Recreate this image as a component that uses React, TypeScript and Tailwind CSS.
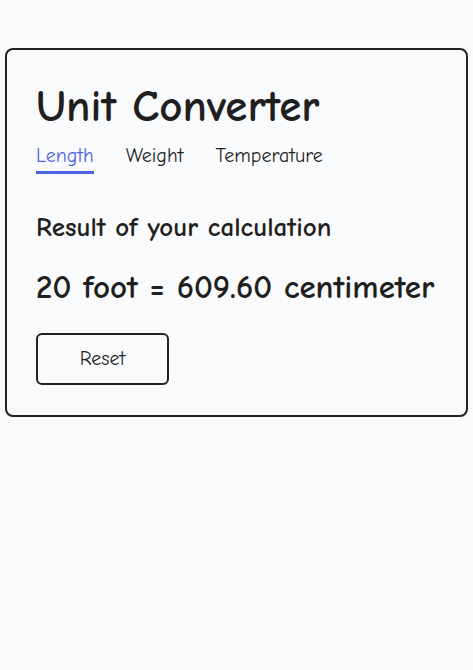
import React, { useState } from 'react';

const tabs = ['Length', 'Weight', 'Temperature'];

export default function App() {
    const [active, setActive] = useState('Length');

    return (
        <div
            className="min-h-screen bg-[#f9fafb] px-[5px] pt-[48px] text-[#1f1f1f]"
            style={{ fontFamily: '"Comic Neue", "Comic Sans MS", "Liberation Sans", sans-serif' }}
        >
            <div className="rounded-[8px] border-2 border-[#222] px-[29px] pt-[28px] pb-[30px]">
                <h1 className="text-[45px] leading-[56px] font-bold">Unit Converter</h1>

                {/* Tabs */}
                <div className="mt-[9px] flex gap-[32px]">
                    {tabs.map(tab => (
                        <button
                            key={tab}
                            onClick={() => setActive(tab)}
                            className={`pb-[2px] text-[20px] leading-[26px] ${
                                active === tab
                                    ? 'border-b-[3px] border-[#4f63e0] text-[#4f63e0]'
                                    : 'border-b-[3px] border-transparent'
                            }`}
                        >
                            {tab}
                        </button>
                    ))}
                </div>

                <div className="mt-[38px] text-[27px] leading-[32px] font-bold">Result of your calculation</div>
                <div className="mt-[23px] text-[33px] leading-[40px] font-bold">20 foot = 609.60 centimeter</div>

                <button className="mt-[26px] h-[52px] w-[133px] rounded-[6px] border-2 border-[#222] text-[20px]">
                    Reset
                </button>
            </div>
        </div>
    );
}
